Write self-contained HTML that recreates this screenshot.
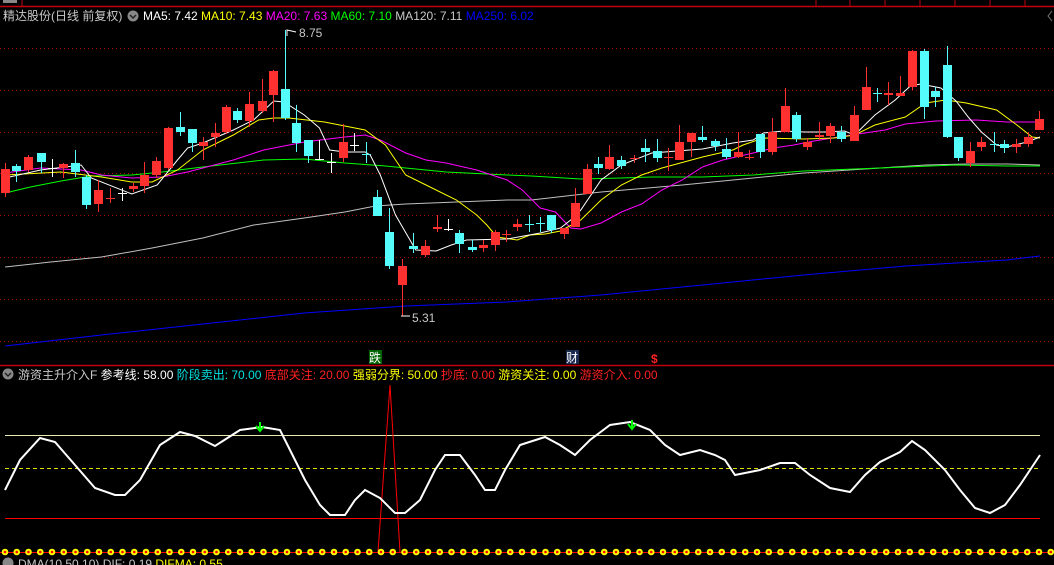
<!DOCTYPE html>
<html><head><meta charset="utf-8"><style>
html,body{margin:0;padding:0;background:#000;width:1054px;height:565px;overflow:hidden}
svg{display:block}
text{font-family:"Liberation Sans","Noto Sans CJK SC",sans-serif;font-size:12px}
</style></head><body>
<svg id="s" width="1054" height="565" viewBox="0 0 1054 565" xmlns="http://www.w3.org/2000/svg">
<rect width="1054" height="565" fill="#000"/>
<line x1="0" y1="6.5" x2="1054" y2="6.5" stroke="#c00010" stroke-width="1.5"/>
<line x1="22" y1="0" x2="22" y2="6" stroke="#c00010"/>
<g stroke="#c00010"><line x1="816" y1="0" x2="816" y2="6"/><line x1="850" y1="0" x2="850" y2="6"/><line x1="885" y1="0" x2="885" y2="6"/><line x1="920" y1="0" x2="920" y2="6"/><line x1="955" y1="0" x2="955" y2="6"/><line x1="990" y1="0" x2="990" y2="6"/><line x1="1025" y1="0" x2="1025" y2="6"/></g>
<rect x="3" y="0" width="14" height="3" fill="#888"/>
<g stroke="#a00000" stroke-dasharray="1 3" stroke-width="1">
<line x1="0" y1="48.5" x2="1054" y2="48.5"/><line x1="0" y1="90.5" x2="1054" y2="90.5"/><line x1="0" y1="132.5" x2="1054" y2="132.5"/><line x1="0" y1="173.5" x2="1054" y2="173.5"/><line x1="0" y1="215.5" x2="1054" y2="215.5"/><line x1="0" y1="257.5" x2="1054" y2="257.5"/><line x1="0" y1="299.5" x2="1054" y2="299.5"/><line x1="0" y1="341.5" x2="1054" y2="341.5"/>
</g>
<g fill="none" stroke-width="1">
<polyline class="ma" stroke="#0000ff" points="5,346 100,335 200,324 300,313 400,306 500,302 600,295 700,285 800,275 900,266 1000,260 1037,256"/>
<polyline class="ma" stroke="#c0c0c0" points="5,267 50,262 100,257 150,248 200,238 250,225 300,218 340,212 370,206 400,204 450,202 500,200 524,200 600,192 680,185 750,178 800,173 860,169 920,165 960,164 1000,164 1037,165"/>
<polyline class="ma" stroke="#00ff00" points="5,193 30,187 60,181 90,176 130,175 160,172 200,167 260,160 300,159 340,163 380,166 440,172 500,175 524,176 580,179 620,178 650,177 700,177 750,175 800,171 850,169 900,167 950,165 1000,166 1037,166"/>
<polyline class="ma" stroke="#ff00ff" points="5,173 40,168 80,170 100,175 130,178 160,177 185,172 200,168 230,160 260,150 300,142 340,137 360,135 375,140 400,153 420,160 440,163 470,170 500,180 515,190 540,208 555,212 570,228 580,229 600,223 620,212 640,204 660,190 680,180 700,167 720,160 750,153 770,148 790,145 810,141 840,136 880,130 900,124 930,121 970,120 1000,122 1033,122"/>
<polyline class="ma" stroke="#ffff00" points="5,175 60,172 100,177 130,182 150,182 175,170 200,150 230,135 255,120 270,118 285,118 320,122 360,130 380,145 400,175 420,185 450,200 470,215 480,225 490,237 510,240 530,235 545,234 560,231 580,220 600,200 620,185 640,175 660,168 700,157 730,150 740,145 760,138 800,139 830,138 850,135 870,125 900,117 920,103 940,100 960,103 990,110 1010,125 1025,137 1033,138"/>
<polyline class="ma" stroke="#ffffff" points="5,178 40,170 80,165 90,178 130,194 155,185 175,160 185,148 200,143 230,130 250,120 270,101 280,102 300,115 315,128 325,150 340,152 360,152 365,155 375,175 390,215 410,250 430,251 445,245 460,240 500,239 540,233 560,228 570,220 580,210 600,180 620,165 650,153 700,149 730,143 750,140 760,133 780,131 800,132 820,132 840,131 850,135 870,115 890,100 905,86 915,84 935,88 950,101 962,117 975,132 990,145 1000,147 1020,142 1033,137"/>
</g>
<g id="candles"></g>
<polyline points="296,32 287,30 287,36" fill="none" stroke="#fff"/>
<text x="299" y="37" fill="#c8c8c8">8.75</text>
<polyline points="410,316 401,316" fill="none" stroke="#fff"/>
<text x="412" y="322" fill="#c8c8c8">5.31</text>
<circle cx="133" cy="16" r="5.5" fill="#888"/><path d="M130,15 l3,3 l3,-3" stroke="#222" fill="none" stroke-width="1.5"/>
<text x="3" y="20" fill="#c8c8c8" font-size="12.5">精达股份(日线 前复权)</text>
<text x="143" y="20"><tspan fill="#fff">MA5: 7.42 </tspan><tspan fill="#ffff00">MA10: 7.43 </tspan><tspan fill="#ff00ff">MA20: 7.63 </tspan><tspan fill="#00ff00">MA60: 7.10 </tspan><tspan fill="#c8c8c8">MA120: 7.11 </tspan><tspan fill="#0000ff">MA250: 6.02</tspan></text>
<path d="M1052,11 l-4,5 l4,5" stroke="#777" fill="none"/>
<rect x="369" y="350" width="13" height="14" fill="#006400"/><text x="369" y="362" fill="#fff" font-size="12">跌</text>
<rect x="566" y="350" width="13" height="14" fill="#1a2a50"/><text x="566" y="362" fill="#fff" font-size="12">财</text>
<text x="651" y="363" fill="#ff2020" font-size="12" font-weight="bold">$</text>
<line x1="0" y1="365.5" x2="1054" y2="365.5" stroke="#c00010" stroke-width="1.5"/>
<circle cx="8" cy="374" r="5.5" fill="#888"/><path d="M5,373 l3,3 l3,-3" stroke="#222" fill="none" stroke-width="1.5"/>
<text x="18" y="379"><tspan fill="#c8c8c8">游资主升介入F </tspan><tspan fill="#fff">参考线: 58.00 </tspan><tspan fill="#00e0e0">阶段卖出: 70.00 </tspan><tspan fill="#ff2020">底部关注: 20.00 </tspan><tspan fill="#ffff00">强弱分界: 50.00 </tspan><tspan fill="#ff2020">抄底: 0.00 </tspan><tspan fill="#ffff00">游资关注: 0.00 </tspan><tspan fill="#ff2020">游资介入: 0.00</tspan></text>
<line x1="5" y1="435.5" x2="1040" y2="435.5" stroke="#e8e8b0"/>
<line x1="5" y1="468.5" x2="1040" y2="468.5" stroke="#e0e000" stroke-dasharray="4 3"/>
<line x1="5" y1="518.5" x2="1040" y2="518.5" stroke="#ff0000"/>
<polyline fill="none" stroke="#ff0000" points="378,552 390,385 400,552"/>
<line x1="0" y1="552.5" x2="1054" y2="552.5" stroke="#ff0000"/>
<polyline fill="none" stroke="#fff" stroke-width="2" points="5,490 20,460 40,438 55,442 75,465 95,488 115,495 125,495 140,480 160,445 180,432 195,436 215,446 240,430 262,427 280,430 290,450 305,480 320,505 330,515 345,515 355,500 365,490 380,498 395,513 405,513 420,500 435,470 445,455 460,455 475,475 485,490 495,490 505,470 520,445 545,437 560,445 575,455 590,440 610,425 630,422 650,430 665,445 680,455 700,450 715,455 725,460 735,475 760,470 780,463 795,463 810,475 830,488 850,492 865,475 880,462 900,452 912,441 925,450 945,470 960,490 975,508 990,513 1005,505 1020,485 1040,455"/>
<path d="M260,422 v8 M256,426 l4,5 l4,-5" stroke="#00ff00" stroke-width="2" fill="none"/>
<path d="M632,420 v8 M628,424 l4,5 l4,-5" stroke="#00ff00" stroke-width="2" fill="none"/>
<g id="dots"></g>
<circle cx="8" cy="563" r="5.5" fill="#888"/>
<text x="18" y="568"><tspan fill="#c8c8c8">DMA(10,50,10) DIF: 0.19 </tspan><tspan fill="#ffff00">DIFMA: 0.55</tspan></text>
</svg>
<script>
var NS="http://www.w3.org/2000/svg";
function el(p,t,a){var e=document.createElementNS(NS,t);for(var k in a)e.setAttribute(k,a[k]);p.appendChild(e);return e;}
function tx(x){var v=x<526?x*1.0142:524+(x-524)*1.0142;return Math.min(v,1040);}
var C={r:"#ff3030",c:"#54fcfc",w:"#ffffff"};
var d=[[5,169,193,163,197,"r"],[16,166,171,164,182,"c"],[28,157,170,155,172,"r"],[40,153,162,153,173,"c"],[51,168,168,159,177,"w"],[62,164,168,163,178,"r"],[74,163,172,150,177,"c"],[85,177,205,175,209,"c"],[97,190,204,180,212,"r"],[108,198,198,188,203,"r"],[120,193,193,188,201,"w"],[131,186,189,183,192,"r"],[142,175,186,162,193,"r"],[154,161,175,157,178,"r"],[166,128,168,127,170,"r"],[177,127,132,112,136,"c"],[189,129,143,129,152,"c"],[200,142,146,137,160,"r"],[212,133,137,123,147,"r"],[223,107,132,105,134,"r"],[234,111,120,108,123,"c"],[246,104,121,92,127,"r"],[258,101,111,79,113,"r"],[269,71,95,70,122,"r"],[281,89,118,30,120,"c"],[292,123,143,105,152,"c"],[304,140,156,140,163,"c"],[315,159,159,140,160,"w"],[326,162,162,153,173,"w"],[338,142,158,124,162,"r"],[349,145,145,133,151,"w"],[361,154,154,142,163,"c"],[372,197,216,190,216,"c"],[384,232,266,208,269,"c"],[396,266,285,259,316,"r"],[407,246,249,233,253,"c"],[419,246,255,240,257,"r"],[431,227,229,215,232,"r"],[442,229,229,219,231,"w"],[453,233,244,230,253,"c"],[465,247,250,240,252,"c"],[476,245,248,240,252,"r"],[488,232,245,230,251,"r"],[499,234,234,230,242,"r"],[510,224,227,219,231,"r"],[521.5,224,224,215,232,"c"],[540,223,223,217,232,"c"],[551,215,230,215,233,"c"],[563,228,234,228,239,"r"],[574,203,227,188,227,"r"],[586,169,194,164,194,"r"],[597,164,168,157,174,"c"],[608,157,169,145,170,"r"],[620,160,166,156,169,"c"],[632,158,158,155,163,"r"],[643,148,152,139,162,"c"],[655,151,158,139,162,"c"],[666,157,157,148,171,"r"],[677,142,160,125,160,"r"],[689,133,142,133,157,"r"],[700,137,140,126,142,"c"],[712,141,146,139,151,"c"],[723,149,157,138,159,"c"],[735,152,157,132,158,"r"],[746,157,157,150,160,"r"],[757,134,152,134,158,"c"],[769,132,152,118,155,"r"],[781,106,132,88,132,"r"],[792,115,139,112,142,"c"],[803,142,147,138,150,"r"],[815,135,137,122,140,"r"],[826,126,136,123,143,"r"],[837,132,139,126,142,"c"],[849,115,141,106,141,"r"],[861,87,110,67,110,"r"],[872,93,93,88,102,"c"],[883,93,95,82,105,"r"],[895,93,96,76,96,"r"],[907,51,87,50,90,"r"],[918,51,107,49,119,"c"],[929,91,97,87,107,"c"],[941,65,137,46,138,"c"],[952,137,158,137,161,"c"],[964,151,163,142,167,"r"],[975,142,147,137,151,"r"],[987,144,144,132,152,"c"],[997,144,148,140,153,"c"],[1009,144,147,139,153,"r"],[1021,137,144,132,147,"r"],[1032,119,130,111,130,"r"]];
var g=document.getElementById("candles");
d.forEach(function(c){var col=C[c[5]];var x=Math.round(tx(c[0]));
el(g,"line",{x1:x+.5,x2:x+.5,y1:c[3],y2:c[4],stroke:col});
var h=Math.max(1,c[2]-c[1]);
el(g,"rect",{x:x-4,y:c[1],width:9,height:h,fill:col});});
Array.prototype.forEach.call(document.querySelectorAll(".ma"),function(p){
var pts=p.getAttribute("points").trim().split(/\s+/).map(function(s){var a=s.split(",");return tx(+a[0]).toFixed(1)+","+a[1];});
p.setAttribute("points",pts.join(" "));});
var dg=document.getElementById("dots");
for(var x=5;x<1054;x+=11.75){el(dg,"circle",{cx:x,cy:552,r:3.3,fill:"#ffff00"});el(dg,"circle",{cx:x,cy:552,r:1.3,fill:"#ff0000"});}
</script>
</body></html>
